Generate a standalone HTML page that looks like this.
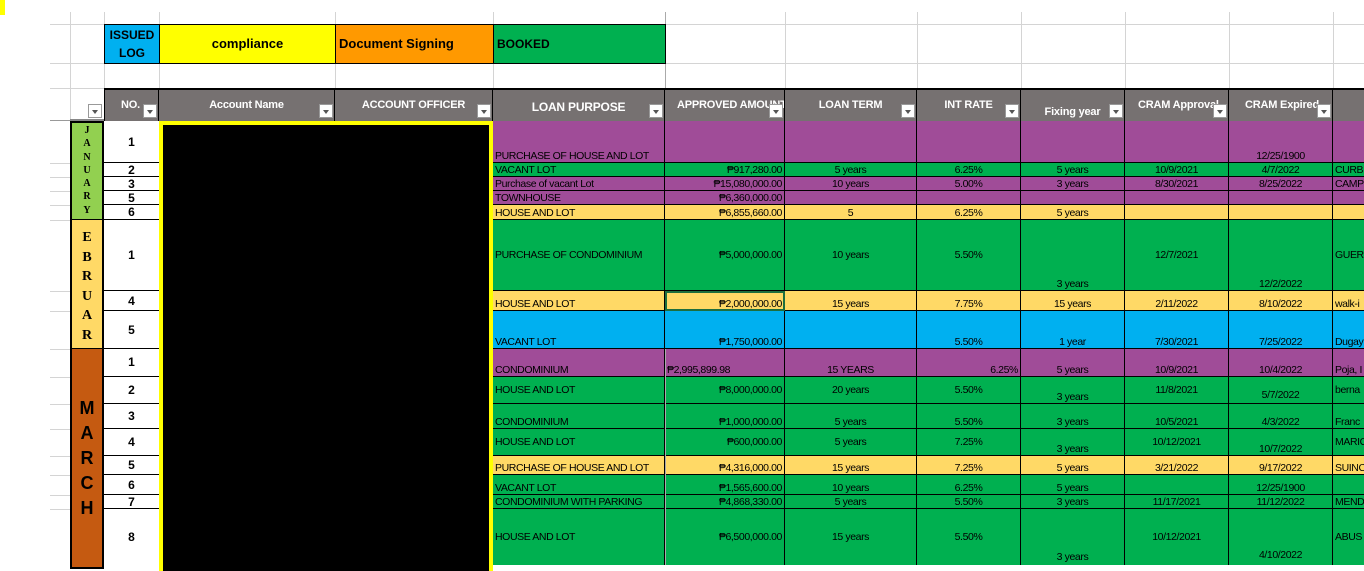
<!DOCTYPE html>
<html><head><meta charset="utf-8"><style>
body{margin:0;width:1364px;height:565px;overflow:hidden;background:#fff;position:relative;font-family:"Liberation Sans",sans-serif;}
.a{position:absolute;box-sizing:border-box}
.gh{position:absolute;height:1px;background:#d4d4d4}
.gv{position:absolute;width:1px;background:#d4d4d4}
.row{position:absolute;left:493px;width:871px;display:flex;font-size:10.5px;letter-spacing:-0.4px;color:#000}
.c{display:flex;align-items:flex-end;justify-content:center;padding:0 2px 0;box-sizing:border-box;border-right:1px solid #000;border-bottom:1px solid #000;white-space:nowrap;overflow:hidden;line-height:11px;height:100%}
.c:nth-child(1){width:172px;justify-content:flex-start}
.c:nth-child(2){width:120px;justify-content:flex-end}
.c:nth-child(3){width:132px}
.c:nth-child(4){width:104px}
.c:nth-child(5){width:104px}
.c:nth-child(6){width:104px}
.c:nth-child(7){width:104px}
.c:nth-child(8){width:31px;justify-content:flex-start;border-right:none}
.m{align-items:center}
.no{position:absolute;left:104px;width:55px;background:#fff;border-bottom:1px solid #000;display:flex;align-items:center;justify-content:center;font-weight:bold;font-size:12px;box-sizing:border-box}
.hd{position:absolute;top:88px;height:33px;background:#767171;color:#fff;font-weight:bold;font-size:11px;text-align:center;border-right:1px solid #000;border-top:2px solid #000;box-sizing:border-box;padding-top:9px;letter-spacing:-0.2px;white-space:nowrap;overflow:hidden}
.dd{position:absolute;width:14px;height:14px;background:#fff;border:1px solid #999;box-sizing:border-box;top:104px}
.dd:after{content:"";position:absolute;left:3px;top:5px;border-left:3px solid transparent;border-right:3px solid transparent;border-top:4px solid #555}
.ml{position:absolute;font-weight:bold;text-align:center;width:34px;left:70px}
</style></head><body>
<div class="a" style="left:0;top:0;width:5px;height:15px;background:#ff0"></div>
<div class="gh" style="left:50px;top:24px;width:1314px"></div>
<div class="gh" style="left:50px;top:63px;width:1314px"></div>
<div class="gh" style="left:50px;top:88px;width:1314px"></div>
<div class="gv" style="left:70px;top:12px;height:110px"></div>
<div class="gv" style="left:104px;top:12px;height:80px"></div>
<div class="gv" style="left:159px;top:12px;height:80px"></div>
<div class="gv" style="left:335px;top:12px;height:80px"></div>
<div class="gv" style="left:493px;top:12px;height:80px"></div>
<div class="gv" style="left:665px;top:12px;height:80px;background:#aaa"></div>
<div class="gv" style="left:785px;top:12px;height:80px"></div>
<div class="gv" style="left:917px;top:12px;height:80px"></div>
<div class="gv" style="left:1021px;top:12px;height:80px"></div>
<div class="gv" style="left:1125px;top:12px;height:80px"></div>
<div class="gv" style="left:1229px;top:12px;height:80px"></div>
<div class="gv" style="left:1333px;top:12px;height:80px"></div>
<div class="gh" style="left:50px;top:120px;width:20px;background:#999"></div>
<div class="gh" style="left:50px;top:163px;width:20px"></div>
<div class="gh" style="left:50px;top:177px;width:20px"></div>
<div class="gh" style="left:50px;top:191px;width:20px"></div>
<div class="gh" style="left:50px;top:205px;width:20px"></div>
<div class="gh" style="left:50px;top:220px;width:20px"></div>
<div class="gh" style="left:50px;top:291px;width:20px"></div>
<div class="gh" style="left:50px;top:311px;width:20px"></div>
<div class="gh" style="left:50px;top:349px;width:20px"></div>
<div class="gh" style="left:50px;top:377px;width:20px"></div>
<div class="gh" style="left:50px;top:404px;width:20px"></div>
<div class="gh" style="left:50px;top:429px;width:20px"></div>
<div class="gh" style="left:50px;top:456px;width:20px"></div>
<div class="gh" style="left:50px;top:475px;width:20px"></div>
<div class="gh" style="left:50px;top:495px;width:20px"></div>
<div class="gh" style="left:50px;top:509px;width:20px"></div>

<div class="a" style="left:104px;top:24px;width:56px;height:40px;background:#00B0F0;border:1px solid #000;font-weight:bold;font-size:12px;text-align:center;line-height:18px;padding-top:1px">ISSUED<br>LOG</div>
<div class="a" style="left:159px;top:24px;width:177px;height:40px;background:#ff0;border:1px solid #000;font-weight:bold;font-size:13px;text-align:center;line-height:38px">compliance</div>
<div class="a" style="left:335px;top:24px;width:159px;height:40px;background:#FF9900;border:1px solid #000;font-weight:bold;font-size:13px;padding-left:3px;line-height:38px;white-space:nowrap">Document Signing</div>
<div class="a" style="left:493px;top:24px;width:173px;height:40px;background:#00B050;border:1px solid #000;font-weight:bold;font-size:12px;padding-left:3px;line-height:38px">BOOKED</div>

<div class="a" style="left:70px;top:88px;width:34px;height:33px;border-bottom:2px solid #888"></div>
<div class="dd" style="left:88px"></div>
<div class="hd" style="left:104px;width:55px;border-left:1px solid #000;text-align:left;padding-left:16px">NO.</div>
<div class="hd" style="left:159px;width:176px">Account Name</div>
<div class="hd" style="left:335px;width:158px">ACCOUNT OFFICER</div>
<div class="hd" style="left:493px;width:172px;font-size:12px;padding-top:10px">LOAN PURPOSE</div>
<div class="hd" style="left:665px;width:120px;text-align:left;padding-left:12px">APPROVED AMOUNT</div>
<div class="hd" style="left:785px;width:132px">LOAN TERM</div>
<div class="hd" style="left:917px;width:104px">INT RATE</div>
<div class="hd" style="left:1021px;width:104px;padding-top:16px">Fixing year</div>
<div class="hd" style="left:1125px;width:104px;text-align:left;padding-left:13px">CRAM Approval</div>
<div class="hd" style="left:1229px;width:104px;text-align:left;padding-left:16px">CRAM Expired</div>
<div class="hd" style="left:1333px;width:31px;border-right:none"></div>
<div class="dd" style="left:143px"></div>
<div class="dd" style="left:319px"></div>
<div class="dd" style="left:477px"></div>
<div class="dd" style="left:649px"></div>
<div class="dd" style="left:769px"></div>
<div class="dd" style="left:901px"></div>
<div class="dd" style="left:1005px"></div>
<div class="dd" style="left:1109px"></div>
<div class="dd" style="left:1213px"></div>
<div class="dd" style="left:1317px"></div>

<div class="a" style="left:70px;top:121px;width:34px;height:100px;background:#92D050;border:2px solid #000"></div>
<div class="ml" style="top:124px;font-family:'Liberation Serif',serif;font-size:10px;line-height:13.3px">J<br>A<br>N<br>U<br>A<br>R<br>Y</div>
<div class="a" style="left:70px;top:220px;width:34px;height:130px;background:#FFD966;border:2px solid #000;border-top:none"></div>
<div class="ml" style="top:228px;font-family:'Liberation Serif',serif;font-size:14px;line-height:19.5px">E<br>B<br>R<br>U<br>A<br>R</div>
<div class="a" style="left:70px;top:349px;width:34px;height:220px;background:#C55A11;border:2px solid #000;border-top:none"></div>
<div class="ml" style="top:396px;font-size:18px;line-height:25px">M<br>A<br>R<br>C<br>H</div>

<div class="no" style="top:121px;height:42px">1</div>
<div class="no" style="top:163px;height:14px">2</div>
<div class="no" style="top:177px;height:14px">3</div>
<div class="no" style="top:191px;height:14px">5</div>
<div class="no" style="top:205px;height:15px">6</div>
<div class="no" style="top:220px;height:71px">1</div>
<div class="no" style="top:291px;height:20px">4</div>
<div class="no" style="top:311px;height:38px">5</div>
<div class="no" style="top:349px;height:28px;align-items:flex-start;padding-top:6px">1</div>
<div class="no" style="top:377px;height:27px;align-items:flex-start;padding-top:6px">2</div>
<div class="no" style="top:404px;height:25px">3</div>
<div class="no" style="top:429px;height:27px">4</div>
<div class="no" style="top:456px;height:19px">5</div>
<div class="no" style="top:475px;height:20px">6</div>
<div class="no" style="top:495px;height:14px">7</div>
<div class="no" style="top:509px;height:56px;border-bottom:none">8</div>

<div class="a" style="left:159px;top:121px;width:334px;height:450px;background:#000;border:4px solid #ff0;border-bottom:none"></div>

<div class="row" style="top:121px;height:42px;background:#A04C98"><div class="c">PURCHASE OF HOUSE AND LOT</div><div class="c"></div><div class="c"></div><div class="c"></div><div class="c"></div><div class="c"></div><div class="c">12/25/1900</div><div class="c"></div></div>
<div class="row" style="top:163px;height:14px;background:#00B050"><div class="c">VACANT LOT</div><div class="c">₱917,280.00</div><div class="c">5 years</div><div class="c">6.25%</div><div class="c">5 years</div><div class="c">10/9/2021</div><div class="c">4/7/2022</div><div class="c">CURB</div></div>
<div class="row" style="top:177px;height:14px;background:#A04C98"><div class="c">Purchase of vacant Lot</div><div class="c">₱15,080,000.00</div><div class="c">10 years</div><div class="c">5.00%</div><div class="c">3 years</div><div class="c">8/30/2021</div><div class="c">8/25/2022</div><div class="c">CAMP</div></div>
<div class="row" style="top:191px;height:14px;background:#A04C98"><div class="c">TOWNHOUSE</div><div class="c">₱6,360,000.00</div><div class="c"></div><div class="c"></div><div class="c"></div><div class="c"></div><div class="c"></div><div class="c"></div></div>
<div class="row" style="top:205px;height:15px;background:#FFD966"><div class="c">HOUSE AND LOT</div><div class="c">₱6,855,660.00</div><div class="c">5</div><div class="c">6.25%</div><div class="c">5 years</div><div class="c"></div><div class="c"></div><div class="c"></div></div>
<div class="row" style="top:220px;height:71px;background:#00B050"><div class="c m">PURCHASE OF CONDOMINIUM</div><div class="c m">₱5,000,000.00</div><div class="c m">10 years</div><div class="c m">5.50%</div><div class="c">3 years</div><div class="c m">12/7/2021</div><div class="c">12/2/2022</div><div class="c m">GUER</div></div>
<div class="row" style="top:291px;height:20px;background:#FFD966"><div class="c">HOUSE AND LOT</div><div class="c" style="outline:2px solid #1e6e3e;outline-offset:-2px">₱2,000,000.00</div><div class="c">15 years</div><div class="c">7.75%</div><div class="c">15 years</div><div class="c">2/11/2022</div><div class="c">8/10/2022</div><div class="c">walk-i</div></div>
<div class="row" style="top:311px;height:38px;background:#00B0F0"><div class="c">VACANT LOT</div><div class="c">₱1,750,000.00</div><div class="c"></div><div class="c">5.50%</div><div class="c">1 year</div><div class="c">7/30/2021</div><div class="c">7/25/2022</div><div class="c">Dugay</div></div>
<div class="row" style="top:349px;height:28px;background:#A04C98"><div class="c">CONDOMINIUM</div><div class="c" style="justify-content:flex-start">₱2,995,899.98</div><div class="c">15 YEARS</div><div class="c" style="justify-content:flex-end">6.25%</div><div class="c">5 years</div><div class="c">10/9/2021</div><div class="c">10/4/2022</div><div class="c">Poja, I</div></div>
<div class="row" style="top:377px;height:27px;background:#00B050"><div class="c m">HOUSE AND LOT</div><div class="c m">₱8,000,000.00</div><div class="c m">20 years</div><div class="c m">5.50%</div><div class="c">3 years</div><div class="c m">11/8/2021</div><div class="c" style="padding-bottom:2px">5/7/2022</div><div class="c m">berna</div></div>
<div class="row" style="top:404px;height:25px;background:#00B050"><div class="c">CONDOMINIUM</div><div class="c">₱1,000,000.00</div><div class="c">5 years</div><div class="c">5.50%</div><div class="c">3 years</div><div class="c">10/5/2021</div><div class="c">4/3/2022</div><div class="c">Franc</div></div>
<div class="row" style="top:429px;height:27px;background:#00B050"><div class="c m">HOUSE AND LOT</div><div class="c m">₱600,000.00</div><div class="c m">5 years</div><div class="c m">7.25%</div><div class="c">3 years</div><div class="c m">10/12/2021</div><div class="c">10/7/2022</div><div class="c m">MARIO</div></div>
<div class="row" style="top:456px;height:19px;background:#FFD966"><div class="c">PURCHASE OF HOUSE AND LOT</div><div class="c">₱4,316,000.00</div><div class="c">15 years</div><div class="c">7.25%</div><div class="c">5 years</div><div class="c">3/21/2022</div><div class="c">9/17/2022</div><div class="c">SUINC</div></div>
<div class="row" style="top:475px;height:20px;background:#00B050"><div class="c">VACANT LOT</div><div class="c">₱1,565,600.00</div><div class="c">10 years</div><div class="c">6.25%</div><div class="c">5 years</div><div class="c"></div><div class="c">12/25/1900</div><div class="c"></div></div>
<div class="row" style="top:495px;height:14px;background:#00B050"><div class="c">CONDOMINIUM WITH PARKING</div><div class="c">₱4,868,330.00</div><div class="c">5 years</div><div class="c">5.50%</div><div class="c">3 years</div><div class="c">11/17/2021</div><div class="c">11/12/2022</div><div class="c">MEND</div></div>
<div class="row" style="top:509px;height:56px;background:#00B050"><div class="c m" style="border-bottom:none">HOUSE AND LOT</div><div class="c m" style="border-bottom:none">₱6,500,000.00</div><div class="c m" style="border-bottom:none">15 years</div><div class="c m" style="border-bottom:none">5.50%</div><div class="c" style="border-bottom:none;padding-bottom:2px">3 years</div><div class="c m" style="border-bottom:none">10/12/2021</div><div class="c" style="border-bottom:none;padding-bottom:4px">4/10/2022</div><div class="c m" style="border-bottom:none">ABUS</div></div>
<div class="a" style="left:665px;top:349px;width:1px;height:216px;background:#aaa"></div>
</body></html>
